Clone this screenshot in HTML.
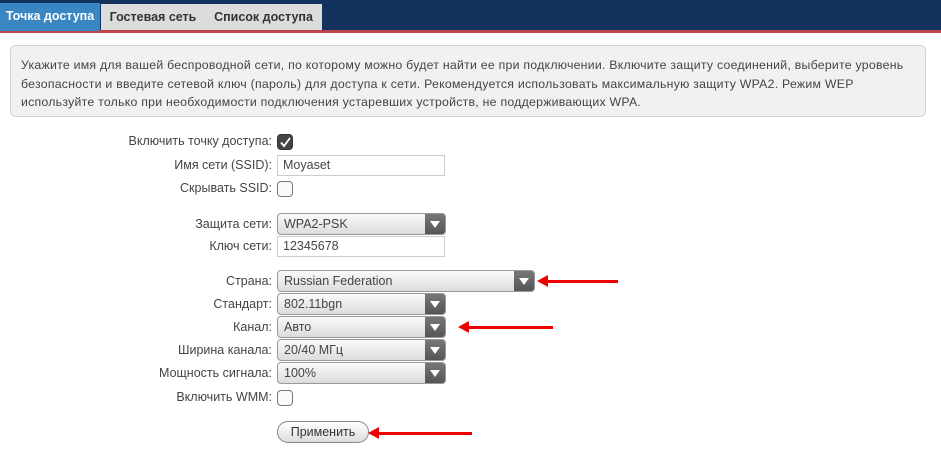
<!DOCTYPE html><html><head><meta charset="utf-8"><style>
body{margin:0;width:941px;height:460px;background:#fff;font-family:"Liberation Sans",sans-serif;position:relative;overflow:hidden;color:#333}
.hdr{position:absolute;left:0;top:0;width:941px;height:31px;background:#12325e}
.red{position:absolute;left:0;top:30px;width:941px;height:3px;background:#c0444c}
.tab{position:absolute;top:4px;height:26px;font-size:12.5px;font-weight:bold;line-height:26px;text-align:center}
.info{position:absolute;left:10px;top:45px;width:916px;height:72px;background:#f1f1f1;border:1px solid #d2d2d2;border-radius:6px;font-size:12.3px;letter-spacing:0.25px;line-height:18.5px;padding:10px 10px 0 10px;box-sizing:border-box;color:#444}
.lbl{position:absolute;right:669px;font-size:12.5px;color:#444;white-space:nowrap}
.in{position:absolute;left:277px;width:168px;height:21px;border:1px solid #ccc;box-sizing:border-box;font-size:12.5px;padding-left:5px;line-height:19px;color:#444}
.sel{position:absolute;left:277px;height:22px;border:1px solid #999;border-radius:4px;box-sizing:border-box;background:linear-gradient(#fafafa,#dcdcdc);font-size:12.5px;padding-left:6px;line-height:20px;color:#444;overflow:hidden}
.sel i{position:absolute;right:0;top:0;width:20px;height:100%;background:linear-gradient(#777,#555)}
.sel i:after{content:"";position:absolute;left:5px;top:7px;border-left:5px solid transparent;border-right:5px solid transparent;border-top:7px solid #fff}
.cb{position:absolute;left:277px;width:16px;height:16px;border:1px solid #777;border-radius:4px;box-sizing:border-box;background:#fafafa}
.arr{position:absolute;height:3px;background:#e00}
.arr:before{content:"";position:absolute;left:-9px;top:-5px;border-top:6.5px solid transparent;border-bottom:6.5px solid transparent;border-right:11px solid #e00}
</style></head><body>
<div class="hdr"></div><div class="red"></div>
<div class="tab" style="left:0;width:100px;background:#3a86c2;color:#fff;top:3px;height:28px">Точка доступа</div>
<div class="tab" style="left:101px;width:104px;background:#dcdcdc;color:#333">Гостевая сеть</div>
<div class="tab" style="left:205px;width:117px;background:#dcdcdc;color:#333">Список доступа</div>
<div class="info">Укажите имя для вашей беспроводной сети, по которому можно будет найти ее при подключении. Включите защиту соединений, выберите уровень<br>безопасности и введите сетевой ключ (пароль) для доступа к сети. Рекомендуется использовать максимальную защиту WPA2. Режим WEP<br>используйте только при необходимости подключения устаревших устройств, не поддерживающих WPA.</div>
<div class="lbl" style="top:134px">Включить точку доступа:</div>
<div class="cb" style="top:134px;background:#444;border-color:#333"><svg width="14" height="14" style="position:absolute;left:0;top:0"><path d="M3 7.5 L6 11 L12 3" stroke="#fff" stroke-width="1.8" fill="none"/></svg></div>
<div class="lbl" style="top:158px">Имя сети (SSID):</div><div class="in" style="top:155px">Moyaset</div>
<div class="lbl" style="top:181px">Скрывать SSID:</div><div class="cb" style="top:181px"></div>
<div class="lbl" style="top:217px">Защита сети:</div><div class="sel" style="top:213px;width:169px">WPA2-PSK<i></i></div>
<div class="lbl" style="top:239px">Ключ сети:</div><div class="in" style="top:236px">12345678</div>
<div class="lbl" style="top:274px">Страна:</div><div class="sel" style="top:270px;width:258px">Russian Federation<i></i></div>
<div class="lbl" style="top:297px">Стандарт:</div><div class="sel" style="top:293px;width:169px">802.11bgn<i></i></div>
<div class="lbl" style="top:320px">Канал:</div><div class="sel" style="top:316px;width:169px">Авто<i></i></div>
<div class="lbl" style="top:343px">Ширина канала:</div><div class="sel" style="top:339px;width:169px">20/40 МГц<i></i></div>
<div class="lbl" style="top:366px">Мощность сигнала:</div><div class="sel" style="top:362px;width:169px">100%<i></i></div>
<div class="lbl" style="top:390px">Включить WMM:</div><div class="cb" style="top:390px"></div>
<div style="position:absolute;left:277px;top:421px;width:92px;height:22px;border:1px solid #888;border-radius:11px;box-sizing:border-box;background:linear-gradient(#fff,#ddd);font-size:12.5px;text-align:center;line-height:20px;color:#333">Применить</div>
<div class="arr" style="left:546px;top:280px;width:72px"></div>
<div class="arr" style="left:467px;top:326px;width:86px"></div>
<div class="arr" style="left:377px;top:432px;width:95px"></div>
</body></html>
